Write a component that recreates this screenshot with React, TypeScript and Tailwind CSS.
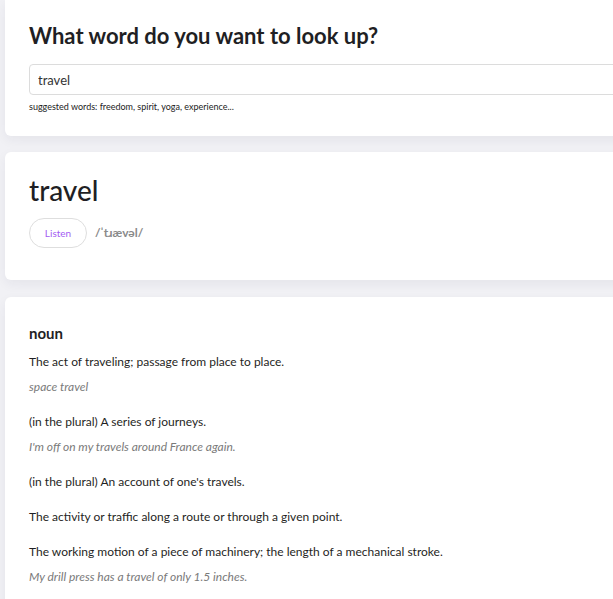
const definitions = [
  {
    text: "The act of traveling; passage from place to place.",
    example: "space travel",
  },
  {
    text: "(in the plural) A series of journeys.",
    example: "I'm off on my travels around France again.",
  },
  { text: "(in the plural) An account of one's travels." },
  { text: "The activity or traffic along a route or through a given point." },
  {
    text: "The working motion of a piece of machinery; the length of a mechanical stroke.",
    example: "My drill press has a travel of only 1.5 inches.",
  },
];

export default function App() {
  return (
    <div
      className="h-[599px] w-[613px] overflow-hidden bg-[#f1f1f5] pl-[5px] text-[#1f1f24]"
      style={{ fontFamily: "Lato, 'Open Sans', sans-serif" }}
    >
      <div className="flex w-[700px] flex-col gap-4">
        <SearchCard />
        <WordCard />
        <MeaningCard />
      </div>
    </div>
  );
}

const SearchCard = () => {
  return (
    <div className="rounded-b-md bg-white px-6 pb-[23px] pt-[22px] shadow-[0_4px_12px_rgba(30,30,60,0.06)]">
      <h1 className="text-[22px] font-bold leading-7">What word do you want to look up?</h1>
      <input
        defaultValue="travel"
        className="mt-[14px] block h-[31px] w-full rounded-[4px] border border-[#dcdcdc] px-2 text-[13px] text-[#333] outline-none"
      />
      <p className="mt-[6px] text-[9px] leading-3 text-[#222]">
        suggested words: freedom, spirit, yoga, experience...
      </p>
    </div>
  );
};

const WordCard = () => {
  return (
    <div className="rounded-md bg-white px-6 pb-8 pt-[22px] shadow-[0_4px_12px_rgba(30,30,60,0.06)]">
      <h2 className="text-[28px] font-medium leading-8">travel</h2>
      <div className="mt-[12px] flex items-center gap-2">
        <button className="h-[30px] w-[58px] rounded-full border border-[#dedede] bg-white text-[10px] text-[#a35cf2]">
          Listen
        </button>
        <span className="text-[12px] font-bold text-[#8a8a8a]">/ˈtɹævəl/</span>
      </div>
    </div>
  );
};

const MeaningCard = () => {
  return (
    <div className="mt-px rounded-t-md bg-white px-6 pb-8 pt-[26px] shadow-[0_4px_12px_rgba(30,30,60,0.06)]">
      <h3 className="text-[15px] font-bold leading-5">noun</h3>
      <div className="mt-[11px] flex flex-col gap-[19px]">
        {definitions.map((d) => (
          <div key={d.text} className="flex flex-col gap-[9px]">
            <p className="text-[12px] leading-4">{d.text}</p>
            {d.example && (
              <p className="text-[12px] italic leading-4 text-[#7a7a7a]">{d.example}</p>
            )}
          </div>
        ))}
      </div>
    </div>
  );
};
